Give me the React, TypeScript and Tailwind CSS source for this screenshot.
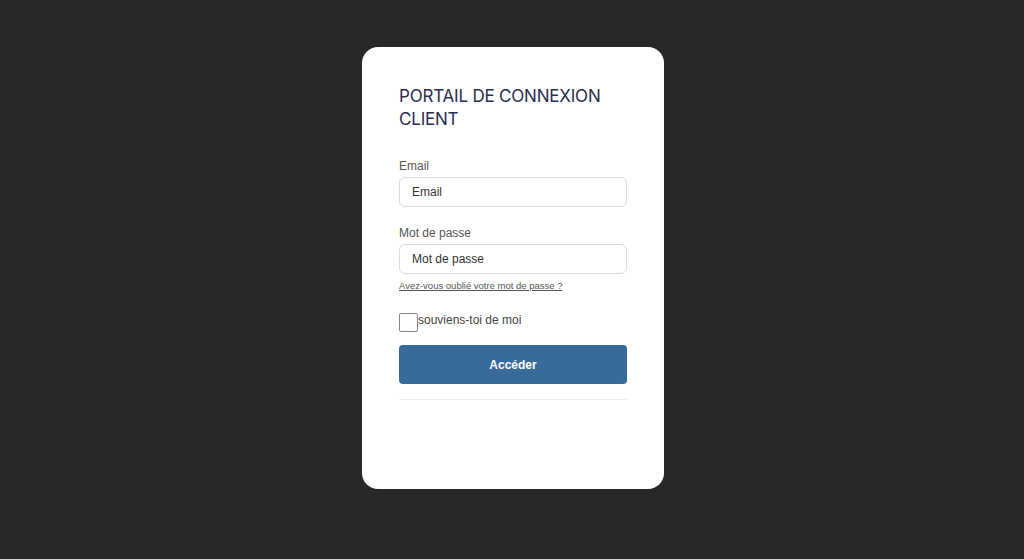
export default function App() {
  return (
    <div className="min-h-screen w-full bg-[#282828] flex justify-center pl-[2px] pt-[47px] font-['Liberation_Sans',Arial,sans-serif]">
      <div className="w-[302px] h-[442px] bg-white rounded-[16px] px-[37px] pt-[38px]">
        <h1 className="text-[17px] leading-[23px] text-[#2b2d4f] font-['Inter',sans-serif] tracking-[-0.2px]">
          PORTAIL DE CONNEXION CLIENT
        </h1>

        <form className="mt-[28px] flex flex-col" onSubmit={(e) => e.preventDefault()}>
          <label className="text-[12px] leading-[14px] text-[#555]">Email</label>
          <input
            type="email"
            placeholder="Email"
            className="mt-[4px] h-[30px] w-full rounded-[6px] border border-[#d9dce2] px-[12px] text-[12px] text-[#333] placeholder:text-[#333] outline-none"
          />

          <label className="mt-[19px] text-[12px] leading-[14px] text-[#555]">Mot de passe</label>
          <input
            type="password"
            placeholder="Mot de passe"
            className="mt-[4px] h-[30px] w-full rounded-[6px] border border-[#d9dce2] px-[12px] text-[12px] text-[#333] placeholder:text-[#333] outline-none"
          />
          <a href="#" className="mt-[6px] text-[9.5px] leading-[12px] text-[#555] underline">
            Avez-vous oublié votre mot de passe ?
          </a>

          <div className="mt-[21px] flex items-start">
            <input type="checkbox" className="appearance-none w-[19px] h-[19px] border border-[#888] rounded-[2px] bg-white" />
            <span className="text-[12px] leading-[14px] text-[#444]">souviens-toi de moi</span>
          </div>

          <button
            type="submit"
            className="mt-[13px] h-[39px] w-full rounded-[4px] bg-[#386a9a] text-white text-[12px] font-bold"
          >
            Accéder
          </button>

          <div className="mt-[15px] border-t border-[#eeeeee]" />
        </form>
      </div>
    </div>
  );
}
